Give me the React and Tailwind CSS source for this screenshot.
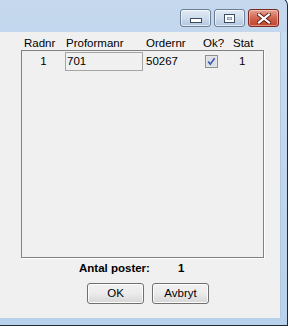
export default function App() {
  const font = { fontFamily: '"Liberation Sans", Arial, sans-serif' };
  return (
    <div className="w-[288px] h-[326px] overflow-hidden bg-white text-[11.5px] text-black leading-none" style={font}>
      <div className="w-[288px] h-[328px] -mt-[2px] flex flex-col border-r border-b border-t border-[#1d2a38] rounded-tr-[7px] bg-gradient-to-b from-[#c5d8ee] via-[#bad1ea] to-[#b9d1ea] overflow-hidden">
        {/* title bar */}
        <div className="h-[33px] shrink-0 flex justify-end items-start pt-[10px] pr-[8px] gap-[3px]">
          <div className="w-[31px] h-[18px] rounded-[3px] border border-[#6d7f97] bg-gradient-to-b from-[#e3ebf5] via-[#cfdcec] to-[#b2c6de] flex items-end justify-center pb-[3px] shadow-[inset_0_0_0_1px_rgba(255,255,255,0.6)]">
            <svg width="12" height="5" viewBox="0 0 12 5">
              <rect x="0.5" y="0.5" width="11" height="4" fill="#fff" stroke="#3b4b60" />
            </svg>
          </div>
          <div className="w-[31px] h-[18px] rounded-[3px] border border-[#6d7f97] bg-gradient-to-b from-[#e3ebf5] via-[#cfdcec] to-[#b2c6de] flex items-center justify-center shadow-[inset_0_0_0_1px_rgba(255,255,255,0.6)]">
            <svg width="11" height="9" viewBox="0 0 11 9">
              <rect x="0.5" y="0.5" width="10" height="8" fill="#fff" stroke="#3b4b60" />
              <rect x="3" y="3" width="5" height="3" fill="#6a7c94" />
              <rect x="3.5" y="3.5" width="4" height="2" fill="#c9d6e6" />
            </svg>
          </div>
          <div className="w-[31px] h-[18px] rounded-[3px] border border-[#7a2a20] bg-gradient-to-b from-[#e6a395] via-[#d0634f] to-[#c0432c] flex items-center justify-center shadow-[inset_0_0_0_1px_rgba(255,220,210,0.5)]">
            <svg width="14" height="11" viewBox="0 0 14 11">
              <path d="M2 1.5 L12 9.5 M12 1.5 L2 9.5" stroke="#5a1b12" strokeWidth="4" strokeLinecap="square" />
              <path d="M2 1.5 L12 9.5 M12 1.5 L2 9.5" stroke="#fff" strokeWidth="2.2" strokeLinecap="square" />
            </svg>
          </div>
        </div>
        {/* body */}
        <div className="flex flex-1">
          <div className="w-[280px] h-[286px] bg-[#f0f0f0] flex flex-col">
            {/* header */}
            <div className="flex pl-[24px] pt-[6px] h-[18px] text-[#000]">
              <span className="w-[42px]">Radnr</span>
              <span className="w-[80px]">Proformanr</span>
              <span className="w-[57px]">Ordernr</span>
              <span className="w-[30px]">Ok?</span>
              <span>Stat</span>
            </div>
            {/* grid */}
            <div className="ml-[21px] w-[243px] h-[208px] border border-[#828282] shadow-[1px_1px_0_#ffffff] pt-[1px]">
              <div className="flex items-center h-[19px]">
                <span className="w-[43px] text-center">1</span>
                <div className="w-[78px] h-[19px] border border-[#a5a5a5] bg-[#f0f0f0] flex items-center pl-[1px]">701</div>
                <span className="w-[62px] pl-[3px]">50267</span>
                <svg width="13" height="13" viewBox="0 0 13 13">
                  <rect x="0.5" y="0.5" width="12" height="12" fill="#e6e6e6" stroke="#8e8f8f" />
                  <rect x="2" y="2" width="9" height="9" fill="#dcdee2" />
                  <path d="M3.2 6.5 L5.3 9.2 L9.6 3.2" fill="none" stroke="#3b5ab8" strokeWidth="1.6" />
                </svg>
                <span className="ml-[21px]">1</span>
              </div>
            </div>
            {/* footer */}
            <div className="flex font-bold pt-[5px] h-[20px]">
              <span className="ml-[79px] w-[99px]">Antal poster:</span>
              <span>1</span>
            </div>
            <div className="flex mt-[5px] ml-[87px] gap-[8px]">
              <div className="w-[57px] h-[21px] rounded-[3px] border border-[#707070] bg-gradient-to-b from-[#f2f2f2] via-[#ebebeb] to-[#d6d6d6] flex items-center justify-center shadow-[inset_0_0_0_1px_#fcfcfc]">OK</div>
              <div className="w-[57px] h-[21px] rounded-[3px] border border-[#707070] bg-gradient-to-b from-[#f2f2f2] via-[#ebebeb] to-[#d6d6d6] flex items-center justify-center shadow-[inset_0_0_0_1px_#fcfcfc]">Avbryt</div>
            </div>
          </div>
          <div className="flex-1 bg-gradient-to-b from-[#c9dcf0] to-[#b9d1ea] border-l border-[#b0c8e2]" />
        </div>
        <div className="h-[7px] shrink-0 bg-[#b9d1ea]" />
      </div>
    </div>
  );
}
